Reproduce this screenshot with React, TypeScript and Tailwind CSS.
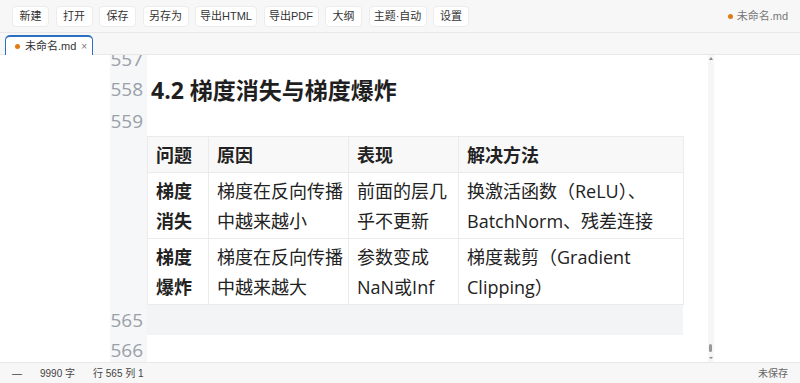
import React from "react";

const FONT = "font-['Open_Sans','Noto_Sans_CJK_SC',sans-serif]";
const UI = "font-['Liberation_Sans','Noto_Sans_CJK_SC',sans-serif]";

const buttons: [string, string][] = [
  ["新建", "w-[37px]"],
  ["打开", "w-[37px]"],
  ["保存", "w-[37px]"],
  ["另存为", "w-[46px]"],
  ["导出HTML", "w-[62px]"],
  ["导出PDF", "w-[55px]"],
  ["大纲", "w-[37px]"],
  ["主题·自动", "w-[58px]"],
  ["设置", "w-[36px]"],
];

function Line({ n, children, h = "h-[30px]", hl = false }: { n?: string; children?: React.ReactNode; h?: string; hl?: boolean }) {
  return (
    <div className="flex">
      <div className={`w-[37px] shrink-0 bg-[#f6f7f8] text-right pr-[4px] text-[19px] text-[#9aa0a8] leading-[30px] ${h}`}>{n}</div>
      <div className={`w-[536px] shrink-0 ${h} ${hl ? "bg-[#f3f4f6]" : ""} flex items-center`}>{children}</div>
    </div>
  );
}

const rows = [
  ["梯度消失", "梯度在反向传播中越来越小", "前面的层几乎不更新", "换激活函数（ReLU）、BatchNorm、残差连接"],
  ["梯度爆炸", "梯度在反向传播中越来越大", "参数变成NaN或Inf", "梯度裁剪（Gradient Clipping）"],
];

export default function App() {
  return (
    <div className={`w-[800px] h-[383px] flex flex-col bg-white overflow-hidden ${FONT}`}>
      {/* toolbar */}
      <div className={`h-[33px] shrink-0 bg-[#f7f7f7] border-b border-[#e8e8e8] flex items-center pl-[12px] pr-[12px] gap-[6.5px] ${UI}`}>
        {buttons.map(([b, w]) => (
          <div key={b} className={`${w} h-[21px] bg-white border border-[#ececec] rounded-[4px] text-[11px] text-[#333] flex items-center justify-center leading-none whitespace-nowrap`}>
            {b}
          </div>
        ))}
        <div className="ml-auto flex items-center gap-[4px] text-[11px] text-[#777] whitespace-nowrap">
          <span className="w-[5px] h-[5px] rounded-full bg-[#e07b12]" />
          <span>未命名.md</span>
        </div>
      </div>
      {/* tab bar */}
      <div className={`h-[22px] shrink-0 bg-[#f7f7f7] border-b border-[#e8e8e8] flex items-end pl-[5px] ${UI}`}>
        <div className="h-[20px] w-[88px] shrink-0 bg-white border-t-2 border-x border-[#2a6fc0] rounded-t-[5px] flex items-center pl-[9px] gap-[5px] text-[11px] text-[#333] -mb-px whitespace-nowrap">
          <span className="w-[5px] h-[5px] shrink-0 rounded-full bg-[#e07b12]" />
          <span>未命名.md</span>
          <span className="text-[10px] text-[#777]">×</span>
        </div>
      </div>
      {/* editor */}
      <div className="flex-1 flex overflow-hidden bg-white">
        <div className="w-[110px] shrink-0" />
        <div className="flex flex-col -mt-[11px] shrink-0">
          <Line n="557" />
          <Line n="558" h="h-[32px]">
            <div className="pl-[4px] text-[23px] font-bold text-[#1f1f1f] leading-[32px]">4.2 梯度消失与梯度爆炸</div>
          </Line>
          <Line n="559" />
          <div className="flex">
            <div className="w-[37px] shrink-0 bg-[#f6f7f8]" />
            <table className="w-[536px] table-fixed border-collapse text-[18px] leading-[30px] text-[#222]">
              <colgroup>
                <col className="w-[61px]" />
                <col className="w-[140px]" />
                <col className="w-[110px]" />
                <col className="w-[225px]" />
              </colgroup>
              <thead>
                <tr className="bg-[#f8f8f8]">
                  {["问题", "原因", "表现", "解决方法"].map((h) => (
                    <th key={h} className="border border-[#ebebeb] text-left font-bold pl-[8px] pr-[3px] py-[2px] h-[36px]">{h}</th>
                  ))}
                </tr>
              </thead>
              <tbody>
                {rows.map((r, i) => (
                  <tr key={i}>
                    {r.map((c, j) => (
                      <td key={j} className={`border border-[#ebebeb] pl-[8px] pr-[3px] py-[2px] h-[66px] align-middle ${j === 0 ? "font-bold" : ""}`}>{c}</td>
                    ))}
                  </tr>
                ))}
              </tbody>
            </table>
          </div>
          <Line n="565" hl />
          <Line n="566" />
        </div>
        <div className="w-[24px] shrink-0" />
        {/* scrollbar */}
        <div className="w-[6px] shrink-0 bg-[#f6f6f6] relative">
          <div className="absolute left-[1px] top-[2px] w-0 h-0 border-l-[2px] border-r-[2px] border-b-[3px] border-l-transparent border-r-transparent border-b-[#888]" />
          <div className="absolute left-[1px] top-[289px] w-[3px] h-[8px] rounded-[2px] bg-[#999]" />
          <div className="absolute left-[1px] top-[302px] w-0 h-0 border-l-[2px] border-r-[2px] border-t-[2px] border-l-transparent border-r-transparent border-t-[#888]" />
        </div>
        <div className="flex-1" />
      </div>
      {/* status bar */}
      <div className={`h-[21px] shrink-0 bg-[#f7f7f7] border-t border-[#e8e8e8] flex items-center pl-[12px] pr-[12px] text-[10px] text-[#444] ${UI}`}>
        <span>—</span>
        <span className="ml-[18px]">9990 字</span>
        <span className="ml-[18px]">行 565 列 1</span>
        <span className="ml-auto text-[#666]">未保存</span>
      </div>
    </div>
  );
}
